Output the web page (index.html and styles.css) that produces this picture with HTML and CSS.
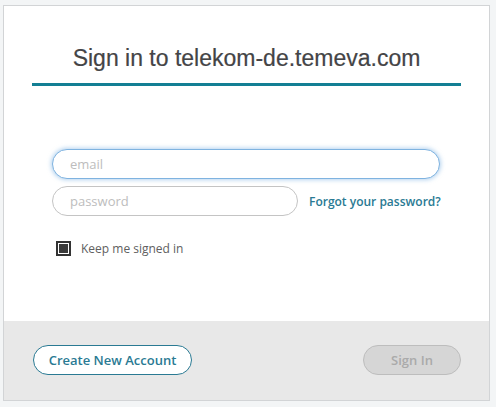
FILE: index.html
```html
<!DOCTYPE html>
<html lang="en">
<head>
<meta charset="UTF-8">
<meta name="viewport" content="width=device-width, initial-scale=1.0">
<title>Sign in</title>
<link rel="stylesheet" href="styles.css">
</head>
<body>
<div class="card">
    <div class="main">
        <h2 class="title">Sign in to telekom-de.temeva.com</h2>
        <form class="fields">
            <input type="email" class="field field-wide focused" placeholder="email">
            <div class="row">
                <input type="password" class="field field-short" placeholder="password">
                <a href="#" class="forgot">Forgot your password?</a>
            </div>
            <label class="remember">
                <span class="box"></span>
                <span>Keep me signed in</span>
            </label>
        </form>
    </div>
    <div class="footer">
        <button type="button" class="btn btn-create">Create New Account</button>
        <button type="button" class="btn btn-signin" disabled>Sign In</button>
    </div>
</div>
</body>
</html>
```

FILE: styles.css
```css
body { margin: 0; background: #f3f5f6;
    font-family: "Open Sans", sans-serif;
}
.card { width: 485px; margin: 5px 0 0 3px; background: #fff;
    border: 1px solid #d2d4d6;
}
.main { height: 315px; padding-top: 39px; box-sizing: border-box;
}
.title { margin: 0 28px; padding-bottom: 12px;
    border-bottom: 3px solid #137f94;
    font-family: "Liberation Sans", Arial, sans-serif;
    font-weight: normal; font-size: 23px; line-height: 26px;
    text-align: center; color: #444446;
    -webkit-text-stroke: 0.2px #444446;
}
.fields { padding: 63px 48px 0; display: flex; flex-direction: column;
}
.field { height: 30px; box-sizing: border-box; padding: 0 17px;
    border: 1px solid #c4c4c4; border-radius: 15px;
    font-family: "Open Sans", sans-serif; font-size: 13px;
    color: #333; outline: none; background: #fff;
}
.field::placeholder { color: #bdbdbd;
}
.field-wide { width: 388px;
}
.focused { border-color: #7fb3e0;
    box-shadow: 0 0 4px 1px rgba(120, 175, 225, 0.55);
}
.row { display: flex; align-items: center; gap: 11px; margin-top: 7px;
}
.field-short { width: 246px;
}
.forgot { font-size: 12px; font-weight: 600; color: #2a7a93;
    text-decoration: none;
}
.remember { display: flex; align-items: center; gap: 10px;
    margin: 24px 0 0 4px; font-size: 12px; color: #606060;
}
.box { width: 15px; height: 15px; box-sizing: border-box;
    border: 2px solid #333; background: #3a3a3a;
    box-shadow: inset 0 0 0 1px #fff;
}
.footer { height: 79px; background: #e8e8e8; padding: 24px 28px 0 29px;
    box-sizing: border-box; display: flex; justify-content: space-between;
    align-items: flex-start;
}
.btn { height: 30px; border-radius: 15px; padding: 0;
    font-family: "Open Sans", sans-serif; font-size: 13px; font-weight: 600;
    white-space: nowrap;
}
.btn-create { width: 159px; background: #fff; color: #2a7a93;
    border: 1px solid #2a7a93; cursor: pointer;
}
.btn-signin { width: 98px; background: #d6d6d6; color: #aaa;
    border: 1px solid #bdbdbd;
}
```
